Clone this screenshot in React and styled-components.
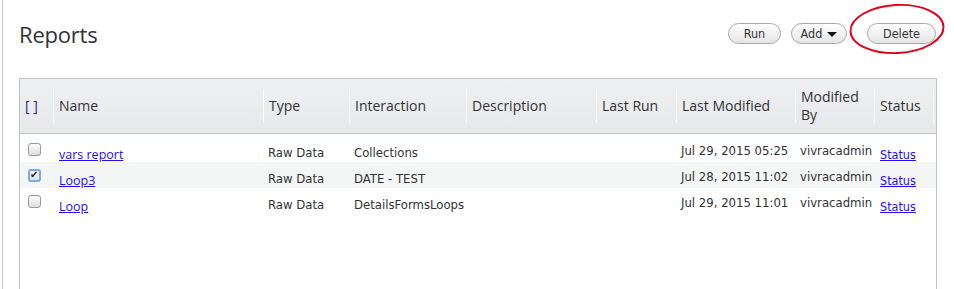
import React from 'react'
import styled, { createGlobalStyle } from 'styled-components'

const columns = [
    { key: 'check', label: '[ ]', width: 33 },
    { key: 'name', label: 'Name', width: 210 },
    { key: 'type', label: 'Type', width: 86 },
    { key: 'interaction', label: 'Interaction', width: 117 },
    { key: 'description', label: 'Description', width: 130 },
    { key: 'lastRun', label: 'Last Run', width: 80 },
    { key: 'modified', label: 'Last Modified', width: 119 },
    { key: 'by', label: 'Modified By', width: 79 },
    { key: 'status', label: 'Status', width: 60 },
]

const reports = [
    { name: 'vars report', type: 'Raw Data', interaction: 'Collections', modified: 'Jul 29, 2015 05:25', by: 'vivracadmin', checked: false },
    { name: 'Loop3', type: 'Raw Data', interaction: 'DATE - TEST', modified: 'Jul 28, 2015 11:02', by: 'vivracadmin', checked: true },
    { name: 'Loop', type: 'Raw Data', interaction: 'DetailsFormsLoops', modified: 'Jul 29, 2015 11:01', by: 'vivracadmin', checked: false },
]

function App() {
    return (
        <>
            <GlobalStyle />
            <Page>
                <TopBar>
                    <Title>Reports</Title>
                    <Actions>
                        <PillButton $w={53}>Run</PillButton>
                        <PillButton $w={56}>
                            Add <Caret />
                        </PillButton>
                        <PillButton $w={69} $space={20}>Delete</PillButton>
                        <Circle viewBox="0 0 100 54">
                            <ellipse cx="50" cy="27" rx="47.5" ry="24.5" fill="none" stroke="#e2001a" strokeWidth="2" transform="rotate(-3 50 27)" />
                        </Circle>
                    </Actions>
                </TopBar>
                <TableBox>
                    <Table>
                        <colgroup>
                            {columns.map((c) => <col key={c.key} style={{ width: c.width }} />)}
                            <col />
                        </colgroup>
                        <thead>
                            <tr>
                                {columns.map((c, i) => (
                                    <Th key={c.key}>
                                        <HeadLabel $first={i === 0} $last={i === columns.length - 1}>
                                            {c.label}
                                        </HeadLabel>
                                    </Th>
                                ))}
                                <Th />
                            </tr>
                        </thead>
                        <tbody>
                            {reports.map((r, i) => (
                                <Row key={r.name} $alt={i % 2 === 1}>
                                    <CheckCell>
                                        <Check type="checkbox" defaultChecked={r.checked} />
                                    </CheckCell>
                                    <LinkCell><ReportLink href="#">{r.name}</ReportLink></LinkCell>
                                    <Td>{r.type}</Td>
                                    <Td>{r.interaction}</Td>
                                    <Td />
                                    <Td />
                                    <Td $raise>{r.modified}</Td>
                                    <Td $raise>{r.by}</Td>
                                    <LinkCell><ReportLink href="#" $small>Status</ReportLink></LinkCell>
                                    <Td />
                                </Row>
                            ))}
                        </tbody>
                    </Table>
                </TableBox>
            </Page>
        </>
    )
}

const GlobalStyle = createGlobalStyle`
    body {
        margin: 0;
        background: #fff;
        font-family: "Open Sans", "Liberation Sans", sans-serif;
    }
`

const Page = styled.div`
    margin-left: 2px;
    border-left: 1px solid #c9c9c9;
    padding: 0 17px 0 16px;
    min-height: 289px;
`

const TopBar = styled.div`
    display: flex;
    justify-content: space-between;
    align-items: flex-start;
    height: 78px;
`

const Title = styled.h1`
    margin: 0;
    padding-top: 19px;
    font-size: 22px;
    line-height: 30px;
    font-weight: 400;
    letter-spacing: -0.2px;
    color: #333;
`

const Actions = styled.div`
    position: relative;
    display: flex;
    gap: 10px;
    margin-top: 23px;
    margin-right: 1px;
`

const PillButton = styled.button`
    display: flex;
    align-items: center;
    justify-content: center;
    gap: 5px;
    width: ${(p) => p.$w}px;
    height: 21px;
    margin-left: ${(p) => (p.$space ? p.$space - 10 : 0)}px;
    padding: 0;
    border: 1px solid #a9a9a9;
    border-radius: 11px;
    background: linear-gradient(#ffffff, #e4e4e4);
    color: #333;
    font-family: "DejaVu Sans Condensed", "DejaVu Sans", sans-serif;
    font-size: 12.5px;
`

const Caret = styled.span`
    width: 0;
    height: 0;
    border-left: 5px solid transparent;
    border-right: 5px solid transparent;
    border-top: 5px solid #111;
    margin-top: 2px;
`

const Circle = styled.svg`
    position: absolute;
    right: -10px;
    top: -21px;
    width: 98px;
    height: 54px;
    overflow: visible;
    pointer-events: none;
`

const TableBox = styled.div`
    border: 1px solid #c4c4c4;
    min-height: 216px;
`

const Table = styled.table`
    width: 100%;
    table-layout: fixed;
    border-collapse: separate;
    border-spacing: 0;
`

const Th = styled.th`
    padding: 10px 0;
    background: linear-gradient(#eef0f1, #e7e8e9);
    border-bottom: 1px solid #c4c4c4;
    text-align: left;
    font-weight: 400;
    vertical-align: top;
`

const HeadLabel = styled.div`
    display: flex;
    align-items: center;
    height: 34px;
    padding-left: 5px;
    border-left: ${(p) => (p.$first ? 'none' : '1px solid #fbfbfb')};
    border-right: ${(p) => (p.$last ? '1px solid #fbfbfb' : 'none')};
    font-size: 14px;
    line-height: 18px;
    color: ${(p) => (p.$first ? '#2d2d78' : '#333')};
`

const Row = styled.tr`
    background: ${(p) => (p.$alt ? '#f4f5f5' : '#fff')};

    & > td {
        height: 26px;
    }
    &:first-child > td {
        border-top: 2px solid transparent;
    }
`

const Td = styled.td`
    box-sizing: border-box;
    padding: ${(p) => (p.$raise ? '8px' : '10px')} 0 0 5px;
    vertical-align: top;
    font-family: "DejaVu Sans Condensed", "DejaVu Sans", sans-serif;
    font-size: 13px;
    line-height: 14px;
    color: #333;
    white-space: nowrap;
    overflow: hidden;
`

const CheckCell = styled.td`
    box-sizing: border-box;
    padding: 7px 0 0 8px;
    vertical-align: top;
    line-height: 0;
`

const LinkCell = styled.td`
    box-sizing: border-box;
    padding: 12px 0 0 6px;
    vertical-align: top;
    font-size: 12.5px;
    line-height: 14px;
    white-space: nowrap;
`

const ReportLink = styled.a`
    color: #1f0ff0;
    text-decoration: underline;
    font-family: ${(p) => (p.$small ? '"DejaVu Sans Condensed", "DejaVu Sans", sans-serif' : '"Open Sans", sans-serif')};
    font-size: 12.5px;
`

const Check = styled.input`
    appearance: none;
    position: relative;
    margin: 0;
    width: 13px;
    height: 13px;
    border: 1px solid #999;
    border-radius: 3px;
    background: linear-gradient(#fdfdfd, #dedede);

    &:checked {
        border: 2px solid #7fa9df;
        background: linear-gradient(#f4f7fb, #d9e4f1);
    }
    &:checked::after {
        content: '✔';
        position: absolute;
        left: 0;
        top: 4px;
        font-size: 10px;
        line-height: 0;
        color: #222;
    }
`

export default App
